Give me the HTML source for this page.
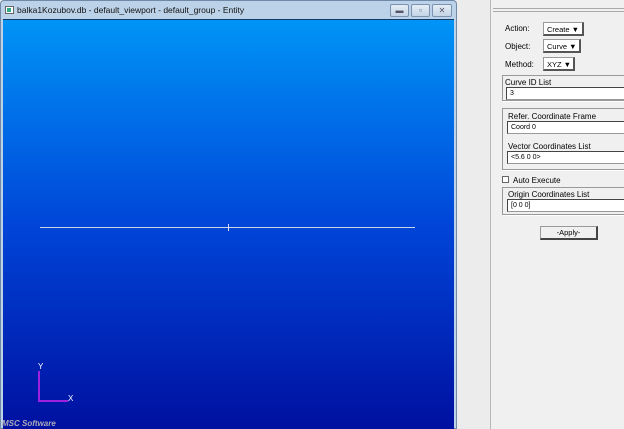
<!DOCTYPE html>
<html><head><style>
*{margin:0;padding:0;box-sizing:border-box}
body{width:624px;height:429px;overflow:hidden;background:#ececec;font-family:"Liberation Sans",sans-serif;font-size:8px;color:#000;position:relative}
.abs{position:absolute}
.win{left:0;top:0;width:457px;height:429px;background:#bcd2e8;border:1px solid #6f89a6;border-radius:4px 4px 0 0}
.vp{left:3px;top:19px;width:451px;height:410px;background:linear-gradient(#0094f6,#0045d8 50%,#0010a0);border-top:1px solid #143a6a}
.title{left:17px;top:5px;font-size:8.5px;color:#111}
.btn{top:4px;height:13px;background:linear-gradient(#e4edf6,#c4d4e6);border:1px solid #7c92ae;border-radius:2px;color:#556;font-size:8px;text-align:center;line-height:11px}
.panel{left:490px;top:0;width:134px;height:429px;background:#f0f0f0;border-left:1px solid #b8b8b8}
.dd{background:#fff;border:1px solid #999;border-right:2px solid #555;border-bottom:2px solid #555;height:14px;padding:2px 0 0 3px;font-size:7.5px;line-height:9px}
.in{background:#fff;border:1px solid #999;border-left:1px solid #444;border-top:1px solid #444;height:13px;padding:1px 0 0 3px;font-size:7px;width:130px;line-height:10px}
.grp{border:1px solid #999;box-shadow:1px 1px 0 #fff}
</style></head><body>
<div class="abs win"></div>
<div class="abs" style="left:5px;top:6px;width:9px;height:8px;background:#fff;border:1px solid #666"><div style="width:4px;height:4px;background:#3a8;margin:1px"></div></div>
<div class="abs title">balka1Kozubov.db - default_viewport - default_group - Entity</div>
<div class="abs btn" style="left:390px;width:19px">▬</div>
<div class="abs btn" style="left:411px;width:19px">▫</div>
<div class="abs btn" style="left:432px;width:20px">✕</div>
<div class="abs vp"></div>
<div class="abs" style="left:40px;top:227px;width:375px;height:1px;background:#c8d8e8"></div>
<div class="abs" style="left:228px;top:224px;width:1px;height:7px;background:#dde"></div>
<div class="abs" style="left:38px;top:371px;width:2px;height:31px;background:#a020e0"></div>
<div class="abs" style="left:38px;top:400px;width:30px;height:2px;background:#a020e0"></div>
<div class="abs" style="left:38px;top:362px;color:#fff;font-size:8px">Y</div>
<div class="abs" style="left:68px;top:394px;color:#fff;font-size:8px">X</div>
<div class="abs" style="left:2px;top:419px;color:#aab;font-size:8px;font-weight:bold;font-style:italic">MSC Software</div>
<div class="abs panel"></div>
<div class="abs" style="left:493px;top:8px;width:131px;height:4px;border-top:1px solid #aaa;border-bottom:1px solid #aaa"></div>
<div class="abs" style="left:505px;top:24px">Action:</div>
<div class="abs dd" style="left:543px;top:22px;width:41px">Create ▼</div>
<div class="abs" style="left:505px;top:42px">Object:</div>
<div class="abs dd" style="left:543px;top:39px;width:38px">Curve ▼</div>
<div class="abs" style="left:505px;top:60px">Method:</div>
<div class="abs dd" style="left:543px;top:57px;width:32px">XYZ ▼</div>
<div class="abs grp" style="left:502px;top:75px;width:130px;height:26px"></div>
<div class="abs" style="left:505px;top:78px">Curve ID List</div>
<div class="abs in" style="left:506px;top:87px">3</div>
<div class="abs grp" style="left:502px;top:108px;width:130px;height:62px"></div>
<div class="abs" style="left:508px;top:112px">Refer. Coordinate Frame</div>
<div class="abs in" style="left:507px;top:121px">Coord 0</div>
<div class="abs" style="left:508px;top:142px">Vector Coordinates List</div>
<div class="abs in" style="left:507px;top:151px">&lt;5.6 0 0&gt;</div>
<div class="abs" style="left:502px;top:176px;width:7px;height:7px;background:#fff;border:1px solid #666"></div>
<div class="abs" style="left:513px;top:176px">Auto Execute</div>
<div class="abs grp" style="left:502px;top:187px;width:130px;height:28px"></div>
<div class="abs" style="left:508px;top:190px">Origin Coordinates List</div>
<div class="abs in" style="left:507px;top:199px">[0 0 0]</div>
<div class="abs" style="left:540px;top:226px;width:58px;height:14px;background:#f0f0f0;border:1px solid #999;border-right:2px solid #444;border-bottom:2px solid #444;text-align:center;font-size:7.5px;line-height:11px">-Apply-</div>
</body></html>
